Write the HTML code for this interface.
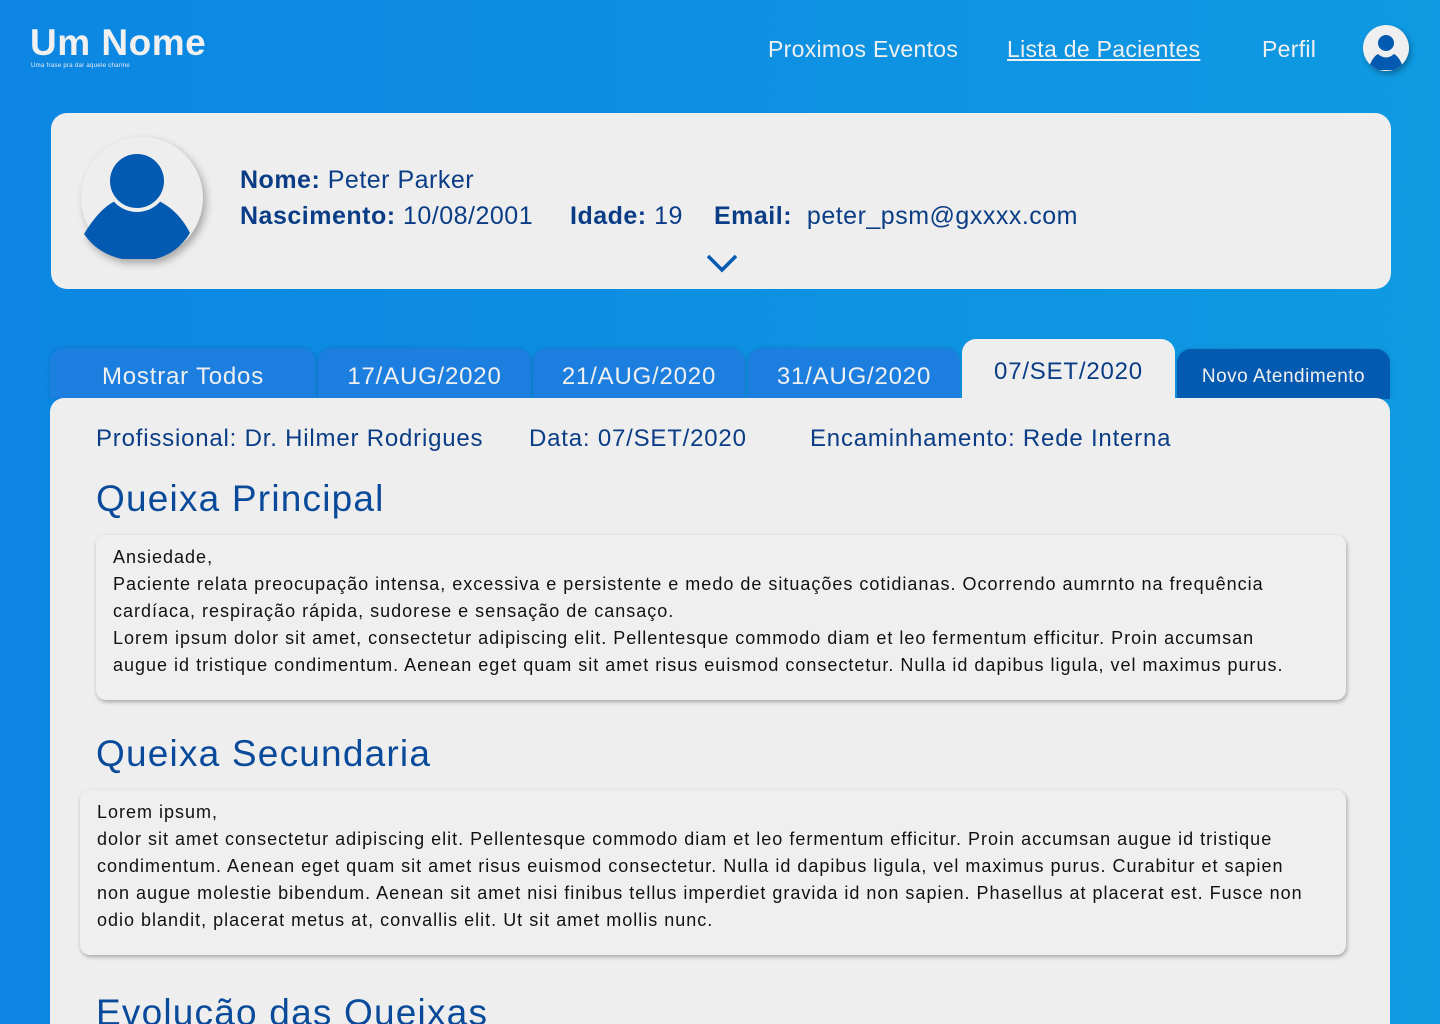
<!DOCTYPE html>
<html style="overflow:hidden;height:1024px"><head><meta charset="utf-8"><style>
*{margin:0;padding:0;box-sizing:border-box}
body{width:1440px;height:1024px;overflow:hidden;position:relative;font-family:"Liberation Sans",sans-serif;background:linear-gradient(90deg,#0c86e2,#0f9ae2)}
.a{position:absolute;white-space:nowrap}
.nav{color:#f0f0f0;font-size:23px;top:36px;letter-spacing:0.3px}
.card{position:absolute;left:51px;top:113px;width:1340px;height:176px;background:#eeeeee;border-radius:16px}
.dk{color:#0a3d85}
.tab{position:absolute;background:#1c7fe0;border-radius:14px 14px 0 0;color:#f0f0f0;font-size:24px;text-align:center;height:50px;padding-top:15px;box-shadow:0 0 4px rgba(0,0,0,.15);letter-spacing:0.8px}
.panel{position:absolute;left:50px;top:398px;width:1340px;height:626px;background:#eeeeee;border-radius:14px 14px 0 0}
.box{position:absolute;background:#efefef;border-radius:10px;box-shadow:1px 2px 4px rgba(0,0,0,.3);font-size:18px;line-height:27px;color:#111;padding:9px 17px;white-space:nowrap;letter-spacing:1px}
h2{position:absolute;font-weight:normal;font-size:37px;color:#0a4a9a;white-space:nowrap;letter-spacing:1.2px}
.inf{font-size:24px;top:425px;letter-spacing:0.8px}
</style></head><body>
<div class="a" style="left:30px;top:22px;color:#f0f0f0;font-size:37px;font-weight:bold;letter-spacing:0.5px">Um Nome</div>
<div class="a" style="left:31px;top:63px;color:#f0f0f0;font-size:6px;letter-spacing:0.3px">Uma frase pra dar aquele charme</div>
<div class="a nav" style="left:768px">Proximos Eventos</div>
<div class="a nav" style="left:1007px;text-decoration:underline">Lista de Pacientes</div>
<div class="a nav" style="left:1262px">Perfil</div>
<svg class="a" style="left:1362px;top:24px;filter:drop-shadow(2px 3px 3px rgba(0,0,0,.3))" width="48" height="48" viewBox="0 0 48 48"><circle cx="24" cy="24" r="23" fill="#efefef"/><clipPath id="c1"><circle cx="24" cy="24" r="23"/></clipPath><g clip-path="url(#c1)" fill="#0459b0"><path d="M6 46 Q10 33 16 30 Q24 37 32 30 Q38 33 42 46Z"/></g><circle cx="24" cy="19" r="9" fill="#0459b0" stroke="#efefef" stroke-width="2"/></svg>
<div class="card">
<svg class="a" style="left:30px;top:24px;filter:drop-shadow(3px 4px 4px rgba(0,0,0,.3))" width="122" height="122" viewBox="0 0 122 122"><circle cx="61" cy="61" r="61" fill="#eeeeee"/><path d="M3 97 Q18 72 34 64 Q56 80 78 64 Q98 74 109 96 Q92 124 56 124 Q20 122 3 97Z" fill="#0459b0"/><circle cx="56" cy="44" r="31" fill="#eeeeee"/><circle cx="56" cy="44" r="27" fill="#0459b0"/></svg>
<div class="a dk" style="left:189px;top:53px;font-size:25px;letter-spacing:0.5px"><b>Nome:</b> Peter Parker</div>
<div class="a dk" style="left:189px;top:89px;font-size:25px;letter-spacing:0.5px"><b>Nascimento:</b> 10/08/2001</div>
<div class="a dk" style="left:519px;top:89px;font-size:25px;letter-spacing:0.5px"><b>Idade:</b> 19</div>
<div class="a dk" style="left:663px;top:89px;font-size:25px;letter-spacing:0.5px"><b>Email:</b>&nbsp; peter_psm@gxxxx.com</div>
<svg class="a" style="left:654px;top:140px" width="34" height="22"><path d="M3 3 L17 17 L31 3" fill="none" stroke="#0459b0" stroke-width="3.5"/></svg>
</div>
<div class="tab" style="left:50px;top:348px;width:266px">Mostrar Todos</div>
<div class="tab" style="left:318px;top:348px;width:213px">17/AUG/2020</div>
<div class="tab" style="left:533px;top:348px;width:212px">21/AUG/2020</div>
<div class="tab" style="left:748px;top:348px;width:212px">31/AUG/2020</div>
<div class="tab" style="left:1177px;top:349px;width:213px;background:#0459b0;font-size:19px;padding-top:17px;letter-spacing:0.5px">Novo Atendimento</div>
<div class="panel"></div>
<div class="tab" style="left:962px;top:339px;width:213px;height:70px;background:#eeeeee;color:#0a3d85;box-shadow:none;padding-top:19px">07/SET/2020</div>
<div class="a dk inf" style="left:96px">Profissional: Dr. Hilmer Rodrigues</div>
<div class="a dk inf" style="left:529px">Data: 07/SET/2020</div>
<div class="a dk inf" style="left:810px">Encaminhamento: Rede Interna</div>
<h2 style="left:96px;top:478px">Queixa Principal</h2>
<div class="box" style="left:96px;top:535px;width:1250px;height:165px">Ansiedade,<br>Paciente relata preocupação intensa, excessiva e persistente e medo de situações cotidianas. Ocorrendo aumrnto na frequência<br>cardíaca, respiração rápida, sudorese e sensação de cansaço.<br>Lorem ipsum dolor sit amet, consectetur adipiscing elit. Pellentesque commodo diam et leo fermentum efficitur. Proin accumsan<br>augue id tristique condimentum. Aenean eget quam sit amet risus euismod consectetur. Nulla id dapibus ligula, vel maximus purus.</div>
<h2 style="left:96px;top:733px">Queixa Secundaria</h2>
<div class="box" style="left:80px;top:790px;width:1266px;height:165px">Lorem ipsum,<br>dolor sit amet consectetur adipiscing elit. Pellentesque commodo diam et leo fermentum efficitur. Proin accumsan augue id tristique<br>condimentum. Aenean eget quam sit amet risus euismod consectetur. Nulla id dapibus ligula, vel maximus purus. Curabitur et sapien<br>non augue molestie bibendum. Aenean sit amet nisi finibus tellus imperdiet gravida id non sapien. Phasellus at placerat est. Fusce non<br>odio blandit, placerat metus at, convallis elit. Ut sit amet mollis nunc.</div>
<h2 style="left:96px;top:992px">Evolução das Queixas</h2>
</body></html>
